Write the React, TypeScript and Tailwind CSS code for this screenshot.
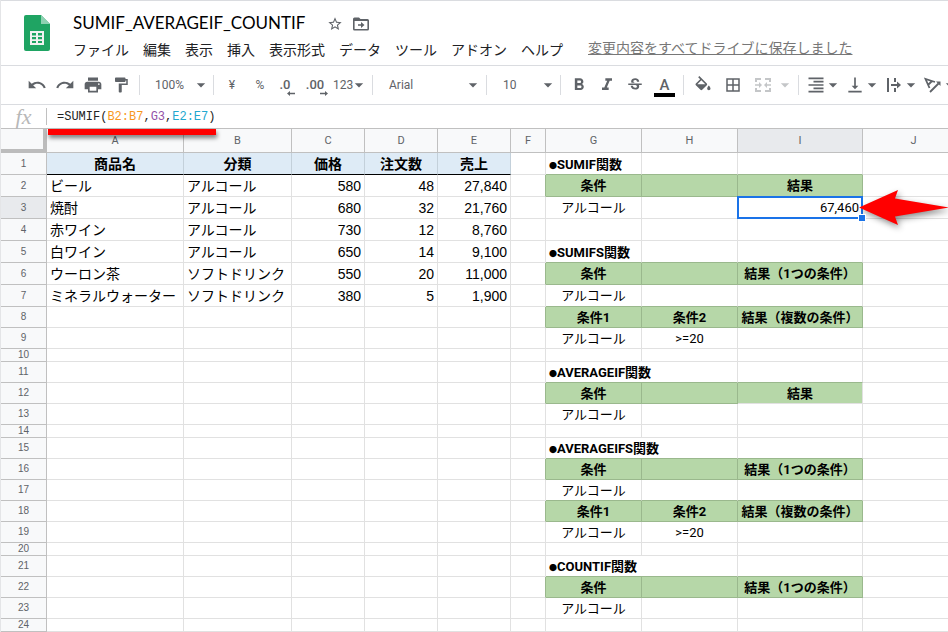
import { type ReactNode } from "react";
import {
  MdUndo,
  MdRedo,
  MdPrint,
  MdFormatPaint,
  MdStarBorder,
  MdFormatBold,
  MdFormatItalic,
  MdStrikethroughS,
  MdBorderAll,
  MdFormatAlignRight,
  MdVerticalAlignBottom,
  MdArrowDropDown,
} from "react-icons/md";

const SANS = "font-['Liberation_Sans','Noto_Sans_CJK_JP',sans-serif]";
const ROBOTO = "font-['Roboto','Noto_Sans_CJK_JP',sans-serif]";

const MENUS = ["ファイル", "編集", "表示", "挿入", "表示形式", "データ", "ツール", "アドオン", "ヘルプ"];

const COLUMNS = [
  { name: "A", width: "w-[137px]" },
  { name: "B", width: "w-[108px]" },
  { name: "C", width: "w-[73px]" },
  { name: "D", width: "w-[73px]" },
  { name: "E", width: "w-[73px]" },
  { name: "F", width: "w-[35px]" },
  { name: "G", width: "w-24" },
  { name: "H", width: "w-24" },
  { name: "I", width: "w-[125px]" },
  { name: "J", width: "w-auto" },
];

const PRODUCTS: string[][] = [
  ["商品名", "分類", "価格", "注文数", "売上"],
  ["ビール", "アルコール", "580", "48", "27,840"],
  ["焼酎", "アルコール", "680", "32", "21,760"],
  ["赤ワイン", "アルコール", "730", "12", "8,760"],
  ["白ワイン", "アルコール", "650", "14", "9,100"],
  ["ウーロン茶", "ソフトドリンク", "550", "20", "11,000"],
  ["ミネラルウォーター", "ソフトドリンク", "380", "5", "1,900"],
];

type Kind = "title" | "head" | "value";
const RESULTS: Record<number, { kind: Kind; cells: string[] }> = {
  1: { kind: "title", cells: ["SUMIF関数", "", ""] },
  2: { kind: "head", cells: ["条件", "", "結果"] },
  3: { kind: "value", cells: ["アルコール", "", "67,460"] },
  5: { kind: "title", cells: ["SUMIFS関数", "", ""] },
  6: { kind: "head", cells: ["条件", "", "結果（1つの条件）"] },
  7: { kind: "value", cells: ["アルコール", "", ""] },
  8: { kind: "head", cells: ["条件1", "条件2", "結果（複数の条件）"] },
  9: { kind: "value", cells: ["アルコール", ">=20", ""] },
  11: { kind: "title", cells: ["AVERAGEIF関数", "", ""] },
  12: { kind: "head", cells: ["条件", "", "結果"] },
  13: { kind: "value", cells: ["アルコール", "", ""] },
  15: { kind: "title", cells: ["AVERAGEIFS関数", "", ""] },
  16: { kind: "head", cells: ["条件", "", "結果（1つの条件）"] },
  17: { kind: "value", cells: ["アルコール", "", ""] },
  18: { kind: "head", cells: ["条件1", "条件2", "結果（複数の条件）"] },
  19: { kind: "value", cells: ["アルコール", ">=20", ""] },
  21: { kind: "title", cells: ["COUNTIF関数", "", ""] },
  22: { kind: "head", cells: ["条件", "", "結果（1つの条件）"] },
  23: { kind: "value", cells: ["アルコール", "", ""] },
};

const WIDE_TITLES = [11, 15, 21];
const SHORT_ROWS = [10, 14, 20, 24];

function rowHeight(row: number) {
  if (row <= 7) return "h-[22px]";
  return SHORT_ROWS.includes(row) ? "h-[13px]" : "h-[21px]";
}

const isGreen = (row: number, col: number) => col >= 6 && col <= 8 && RESULTS[row]?.kind === "head";

function cellBorders(row: number, col: number) {
  if (row === 1 && col < 5) return "border-b-black border-r-[#c3d0da]";
  if (row === 12 && col === 8) return "border-b-[#e1e1e1] border-r-[#e1e1e1]";
  const bottom = isGreen(row, col) || isGreen(row + 1, col) ? "border-b-[#9ab88d]" : "border-b-[#e1e1e1]";
  const right = isGreen(row, col) || isGreen(row, col + 1) ? "border-r-[#9ab88d]" : "border-r-[#e1e1e1]";
  return `${bottom} ${right}`;
}

function Cell({ row, col }: { row: number; col: number }) {
  const base = "border-r border-b whitespace-nowrap";
  const borders = cellBorders(row, col);
  if (col < 5) {
    const text = PRODUCTS[row - 1]?.[col] ?? "";
    if (row === 1) {
      return (
        <td className={`${base} ${borders} ${SANS} bg-[#deebf6] p-0 text-center text-sm leading-5 font-bold`}>{text}</td>
      );
    }
    if (!text) return <td className={`${base} ${borders} p-0`} />;
    return (
      <td className={`${base} ${borders} ${SANS} px-[3px] py-0 text-sm leading-5 ${col > 1 ? "text-right" : "text-left"}`}>
        {text}
      </td>
    );
  }
  const result = RESULTS[row];
  if (!result || col < 6 || col > 8) return <td className={`${base} ${borders} p-0`} />;
  const text = result.cells[col - 6];
  const line = row > 7 || result.kind === "title" ? "pt-[2px] text-[13px] leading-[18px]" : "text-[13px] leading-5";
  if (result.kind === "title") {
    const wide = WIDE_TITLES.includes(row);
    if (wide && col === 7) return null;
    return (
      <td colSpan={wide && col === 6 ? 2 : 1} className={`${base} ${borders} ${line} pl-[3px] text-left font-bold`}>
        {text && (
          <>
            <span className="text-[8px] leading-none">●</span>
            {text}
          </>
        )}
      </td>
    );
  }
  if (result.kind === "head") {
    return <td className={`${base} ${borders} ${line} bg-[#b6d7a8] text-center font-bold`}>{text}</td>;
  }
  const selected = row === 3 && col === 8;
  return (
    <td className={`${base} ${borders} ${line} ${selected ? "relative z-10 pr-[3px] text-right" : "text-center"}`}>
      {text}
      {selected && (
        <>
          <span className="absolute -inset-px border-2 border-[#1a73e8]" />
          <Arrow />
          <span className="absolute -right-1 -bottom-1 size-2 border border-white bg-[#1a73e8]" />
        </>
      )}
    </td>
  );
}

function Arrow() {
  return (
    <svg
      className="absolute top-1/2 left-full h-10 w-[92px] -translate-y-1/2 overflow-visible drop-shadow-[2px_3px_3px_rgba(0,0,0,0.45)]"
      viewBox="0 0 92 40"
      aria-hidden="true"
    >
      <path d="M-3 19.500L36 2L33 10.500L87 19.500L33 28.500L36 37Z" fill="#f00" />
    </svg>
  );
}

function Caret({ faded = false }: { faded?: boolean }) {
  return <MdArrowDropDown className={`-mx-1 size-5 shrink-0 ${faded ? "text-[#c4c6c8]" : "text-[#5f6368]"}`} />;
}

function Tool({ label, className, children }: { label: string; className: string; children: ReactNode }) {
  return (
    <button type="button" aria-label={label} className={`flex h-6 shrink-0 items-center ${className}`}>
      {children}
    </button>
  );
}

function Divider({ className }: { className: string }) {
  return <span className={`h-5 w-px shrink-0 bg-[#dadce0] ${className}`} />;
}

function Decimals({ text, more }: { text: string; more: boolean }) {
  return (
    <span className="relative text-[13px] font-medium">
      {text}
      <svg className="absolute -right-1 -bottom-[2px] h-[5px] w-2" viewBox="0 0 8 5" fill="#5f6368" aria-hidden="true">
        <path d={more ? "M0 1.800H5V0L8 2.500L5 5V3.200H0Z" : "M8 1.800H3V0L0 2.500L3 5V3.200H8Z"} />
      </svg>
    </span>
  );
}

function SheetsLogo() {
  return (
    <svg className="mt-[14px] ml-[23px] h-9 w-[26px] shrink-0" viewBox="0 0 26 36" aria-hidden="true">
      <path d="M2 0H17L26 9V34a2 2 0 0 1-2 2H2a2 2 0 0 1-2-2V2a2 2 0 0 1 2-2Z" fill="#1fa463" />
      <path d="M17 0L26 9H17Z" fill="#8ed1b1" />
      <path d="M6 16H20V30H6ZM8 18V20.5H12V18ZM14 18V20.5H18V18ZM8 22V24.300H12V22ZM14 22V24.300H18V22ZM8 26V28H12V26ZM14 26V28H18V26Z" fill="#f1f1f1" fillRule="evenodd" />
    </svg>
  );
}

function Header() {
  return (
    <header className="flex h-[66px] border-t border-b border-[#dadce0]">
      <SheetsLogo />
      <div className="ml-[23px] min-w-0">
        <div className="flex h-9 items-end">
          <h1 className="font-['Lato',sans-serif] text-[17px] leading-7 whitespace-nowrap text-black">SUMIF_AVERAGEIF_COUNTIF</h1>
          <button type="button" aria-label="スター" className="mb-[5px] ml-[21px] text-[#5f6368]">
            <MdStarBorder className="size-4" />
          </button>
          <button type="button" aria-label="移動" className="mb-[5px] ml-[10px]">
            <svg className="h-4 w-4" viewBox="0 0 16 16" aria-hidden="true">
              <path
                d="M1.500 1.500H6L7.500 3H14.500A1.500 1.500 0 0 1 16 4.500V13A1.500 1.500 0 0 1 14.500 14.500H1.500A1.500 1.500 0 0 1 0 13V3A1.500 1.500 0 0 1 1.500 1.500ZM1.600 5V13H14.400V5Z"
                fill="#5f6368"
                fillRule="evenodd"
              />
              <path d="M5 8.300H8V6L11.500 9L8 12V9.700H5Z" fill="#5f6368" />
            </svg>
          </button>
        </div>
        <nav className="flex items-start gap-[14px] text-sm leading-[26px] whitespace-nowrap text-[#202124]">
          {MENUS.map((m) => (
            <button type="button" key={m}>{m}</button>
          ))}
          <a href="#saved" className="ml-[11px] leading-[22px] text-[#777] underline">変更内容をすべてドライブに保存しました</a>
        </nav>
      </div>
    </header>
  );
}

function Toolbar() {
  return (
    <div className="flex h-[39px] items-center overflow-hidden border-b border-[#dadce0] text-xs text-[#5f6368]">
      <Tool label="元に戻す" className="ml-[26px] w-5 justify-center"><MdUndo className="size-5" /></Tool>
      <Tool label="やり直し" className="ml-2 w-5 justify-center"><MdRedo className="size-5" /></Tool>
      <Tool label="印刷" className="ml-2 w-5 justify-center"><MdPrint className="size-5" /></Tool>
      <Tool label="書式を貼り付け" className="ml-2 w-5 justify-center"><MdFormatPaint className="size-[18px]" /></Tool>
      <Divider className="ml-2" />
      <Tool label="ズーム" className="ml-[15px] w-[52px] justify-between">100%<Caret /></Tool>
      <Divider className="ml-[6px]" />
      <Tool label="通貨" className="ml-2 w-5 justify-center">¥</Tool>
      <Tool label="パーセント" className="ml-2 w-5 justify-center">%</Tool>
      <Tool label="小数点以下を減らす" className="ml-[5px] w-5 justify-center"><Decimals text=".0" more={false} /></Tool>
      <Tool label="小数点以下を増やす" className="ml-[10px] w-5 justify-center"><Decimals text=".00" more /></Tool>
      <Tool label="表示形式の詳細" className="ml-2 w-8 justify-between">123<Caret /></Tool>
      <Divider className="ml-[7px]" />
      <Tool label="フォント" className="ml-4 w-[90px] justify-between">Arial<Caret /></Tool>
      <Divider className="ml-[7px]" />
      <Tool label="フォントサイズ" className="ml-4 w-[51px] justify-between">10<Caret /></Tool>
      <Divider className="ml-[6px]" />
      <Tool label="太字" className="ml-2 w-5 justify-center"><MdFormatBold className="size-5" /></Tool>
      <Tool label="斜体" className="ml-2 w-5 justify-center"><MdFormatItalic className="size-5" /></Tool>
      <Tool label="取り消し線" className="ml-2 w-5 justify-center"><MdStrikethroughS className="size-[18px]" /></Tool>
      <Tool label="テキストの色" className="ml-[9px] w-[21px] flex-col justify-end">
        <span className="text-[15px] leading-4 font-medium">A</span>
        <span className="h-1 w-full bg-black" />
      </Tool>
      <Divider className="ml-2" />
      <Tool label="塗りつぶしの色" className="ml-[9px] w-5 justify-center">
        <svg className="mb-1 h-[15px] w-5" viewBox="0 0 24 18" fill="#5f6368" aria-hidden="true">
          <path d="M16.560 8.940L7.620 0 6.210 1.410l2.380 2.380-5.150 5.150c-.59.59-.59 1.540 0 2.120l5.500 5.500c.29.29.68.44 1.060.44s.77-.15 1.060-.44l5.500-5.500c.59-.58.59-1.530 0-2.120zM5.210 10L10 5.210 14.790 10H5.210zM19 11.500s-2 2.170-2 3.500c0 1.100.9 2 2 2s2-.9 2-2c0-1.330-2-3.500-2-3.500z" />
        </svg>
      </Tool>
      <Tool label="枠線" className="ml-[10px] w-5 justify-center"><MdBorderAll className="size-[18px]" /></Tool>
      <Tool label="セルを結合" className="ml-3 w-9 justify-between">
        <svg className="h-[14px] w-4" viewBox="0 0 16 14" aria-hidden="true">
          <path d="M0 1H6M10 1H16M0 13H6M10 13H16M1 0V4M1 10V14M15 0V4M15 10V14" stroke="#c4c6c8" strokeWidth="2" />
          <path d="M0 6.300H4V4L7 7L4 10V7.700H0ZM16 6.300H12V4L9 7L12 10V7.700H16Z" fill="#c4c6c8" />
        </svg>
        <Caret faded />
      </Tool>
      <Divider className="ml-[7px]" />
      <Tool label="水平方向の配置" className="ml-[7px] w-[33px] justify-between"><MdFormatAlignRight className="size-5" /><Caret /></Tool>
      <Tool label="垂直方向の配置" className="ml-[6px] w-[33px] justify-between"><MdVerticalAlignBottom className="size-5" /><Caret /></Tool>
      <Tool label="テキストの折り返し" className="ml-[6px] w-[33px] justify-between">
        <svg className="size-5" viewBox="0 0 20 20" aria-hidden="true">
          <path d="M4 3V17M11 3V7M11 13V17M7 10H14" fill="none" stroke="#5f6368" strokeWidth="2" />
          <path d="M13 6.500L17 10L13 13.500Z" fill="#5f6368" />
        </svg>
        <Caret />
      </Tool>
      <Tool label="テキストの回転" className="ml-[6px] w-[33px] justify-between">
        <svg className="size-5" viewBox="0 0 20 20" aria-hidden="true">
          <path d="M12 7L2.500 4L6.500 13M9 6L5 10M7 17L15.500 8.500" fill="none" stroke="#5f6368" strokeWidth="1.800" />
          <path d="M13 6.500H17.500V11Z" fill="#5f6368" />
        </svg>
        <Caret />
      </Tool>
    </div>
  );
}

function FormulaBar() {
  return (
    <div className="relative flex h-6 items-center border-b border-[#c0c0c0]">
      <span className="w-[45px] text-center font-['Liberation_Serif',serif] text-[22px] leading-5 text-[#b8b8b8] italic">fx</span>
      <span className="h-[17px] w-px bg-[#c0c0c0]" />
      <output className="ml-[10px] font-['Liberation_Mono',monospace] text-xs text-[#222]">
        =SUMIF(<span className="text-[#f7981d]">B2:B7</span>,<span className="text-[#9352a8]">G3</span>,
        <span className="text-[#22a7cf]">E2:E7</span>)
      </output>
      <span className="absolute top-6 left-[47px] z-10 h-[6px] w-[168px] bg-[#f00] shadow-[1px_3px_4px_rgba(0,0,0,0.5)]" />
    </div>
  );
}

function Sheet() {
  return (
    <main className="overflow-hidden">
      <table className="w-full min-w-[964px] table-fixed border-separate border-spacing-0 text-black">
        <colgroup>
          <col className="w-[46px]" />
          {COLUMNS.map((c) => (
            <col key={c.name} className={c.width} />
          ))}
        </colgroup>
        <thead>
          <tr className="h-6">
            <th aria-label="すべて選択" className="border-r-4 border-b-4 border-[#bcbcbc] bg-[#f8f9fa] p-0" />
            {COLUMNS.map((c) => (
              <th
                key={c.name}
                scope="col"
                className={`border-r border-b border-[#c0c0c0] p-0 text-[11px] leading-5 font-normal text-[#5f6368] ${c.name === "I" ? "bg-[#e8eaed]" : "bg-[#f8f9fa]"}`}
              >
                {c.name}
              </th>
            ))}
          </tr>
        </thead>
        <tbody>
          {Array.from({ length: 24 }, (_, i) => i + 1).map((row) => (
            <tr key={row} className={rowHeight(row)}>
              <th
                scope="row"
                className={`border-r border-b border-[#c0c0c0] p-0 text-[10px] leading-3 font-normal text-[#5f6368] ${SANS} ${row === 3 ? "bg-[#e8eaed]" : "bg-[#f8f9fa]"}`}
              >
                {row}
              </th>
              {COLUMNS.map((c, col) => (
                <Cell key={c.name} row={row} col={col} />
              ))}
            </tr>
          ))}
        </tbody>
      </table>
    </main>
  );
}

export default function App() {
  return (
    <div className={`overflow-hidden border-l border-[#e4e5e7] bg-white ${ROBOTO}`}>
      <Header />
      <Toolbar />
      <FormulaBar />
      <Sheet />
    </div>
  );
}
